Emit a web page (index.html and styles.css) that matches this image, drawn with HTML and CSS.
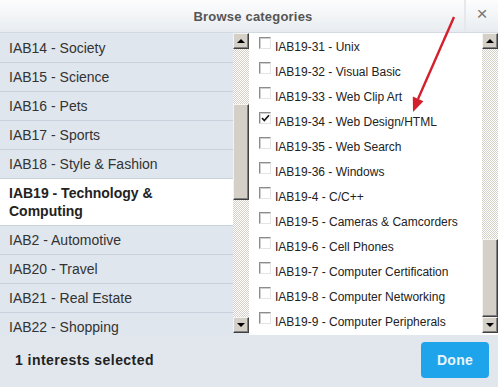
FILE: index.html
```html
<!DOCTYPE html>
<html lang="en">
<head>
  <meta charset="UTF-8" />
  <title>Browse categories</title>
  <meta name="viewport" content="width=device-width, initial-scale=1.0" />
  <link rel="stylesheet" href="styles.css">
</head>
<body>
  <div class="dialog">
    <header class="dlg-head">
      <h1 class="dlg-title">Browse categories</h1>
      <span class="dlg-close">&times;</span>
    </header>

    <div class="dlg-body">
      <div class="pane pane-cats">
        <ul class="cat-list">
          <li>IAB14 - Society</li>
          <li>IAB15 - Science</li>
          <li>IAB16 - Pets</li>
          <li>IAB17 - Sports</li>
          <li>IAB18 - Style &amp; Fashion</li>
          <li class="active">IAB19 - Technology &amp; Computing</li>
          <li>IAB2 - Automotive</li>
          <li>IAB20 - Travel</li>
          <li>IAB21 - Real Estate</li>
          <li>IAB22 - Shopping</li>
        </ul>
        <div class="scrollbar">
          <span class="sb-btn up"></span>
          <span class="sb-track"><span class="sb-thumb" style="margin-top: 55px; height: 96px;"></span></span>
          <span class="sb-btn down"></span>
        </div>
      </div>

      <div class="pane pane-subs">
        <ul class="sub-list">
          <li><span class="box"></span>IAB19-31 - Unix</li>
          <li><span class="box"></span>IAB19-32 - Visual Basic</li>
          <li><span class="box"></span>IAB19-33 - Web Clip Art</li>
          <li><span class="box checked"><svg width="9" height="9" viewBox="0 0 9 9"><path d="M1 4 L3.3 6.5 L8 1.2" fill="none" stroke="#111" stroke-width="1.6"/></svg></span>IAB19-34 - Web Design/HTML</li>
          <li><span class="box"></span>IAB19-35 - Web Search</li>
          <li><span class="box"></span>IAB19-36 - Windows</li>
          <li><span class="box"></span>IAB19-4 - C/C++</li>
          <li><span class="box"></span>IAB19-5 - Cameras &amp; Camcorders</li>
          <li><span class="box"></span>IAB19-6 - Cell Phones</li>
          <li><span class="box"></span>IAB19-7 - Computer Certification</li>
          <li><span class="box"></span>IAB19-8 - Computer Networking</li>
          <li><span class="box"></span>IAB19-9 - Computer Peripherals</li>
        </ul>
        <div class="scrollbar">
          <span class="sb-btn up"></span>
          <span class="sb-track"><span class="sb-thumb" style="margin-top: 190px; height: 78px;"></span></span>
          <span class="sb-btn down"></span>
        </div>
      </div>
    </div>

    <footer class="dlg-foot">
      <span class="count">1 interests selected</span>
      <button class="btn-done">Done</button>
    </footer>

    <!-- red pointer drawn over the screenshot -->
    <svg class="pointer" width="498" height="387" viewBox="0 0 498 387">
      <path d="M454 17 L418 99" stroke="#d3202c" stroke-width="2.4" fill="none"/>
      <path d="M413 112 L412.8 96.6 L423.4 101.2 Z" fill="#d3202c"/>
    </svg>
  </div>
</body>
</html>
```

FILE: styles.css
```css
* {
  box-sizing: border-box;
}

body {
  margin: 0;
  background-color: #fff;
  font-family: "Liberation Sans", Arial, sans-serif;
  color: #333;
}

.dialog {
  position: relative;
  width: 498px;
  height: 387px;
  display: flex;
  flex-direction: column;
  overflow: hidden;
  background-color: #e1e7ee;
}

/* header */
.dlg-head {
  height: 33px;
  flex: none;
  display: flex;
  align-items: stretch;
  background: linear-gradient(#fdfdfd, #e8ecf0);
  border-bottom: 1px solid #d3dae2;
}

.dlg-title {
  flex: 1;
  margin: 0;
  padding-left: 42px;
  font-size: 13px;
  font-weight: bold;
  letter-spacing: 0.2px;
  color: #555;
  display: flex;
  align-items: center;
  justify-content: center;
}

.dlg-close {
  width: 34px;
  border-left: 2px solid #e6e9ec;
  display: flex;
  align-items: center;
  justify-content: center;
  font-size: 19px;
  color: #777;
  padding-bottom: 4px;
}

/* body */
.dlg-body {
  height: 302px;
  flex: none;
  display: flex;
}

.pane {
  display: flex;
  height: 100%;
}

.pane-cats {
  width: 249px;
}

.pane-subs {
  flex: 1;
  background-color: #fff;
}

.cat-list,
.sub-list {
  list-style: none;
  margin: 0;
  padding: 0;
  flex: 1;
  overflow: hidden;
}

.cat-list {
  padding-top: 1px;
  width: 233px;
}

.cat-list li {
  padding: 6px 9px;
  line-height: 16px;
  font-size: 14px;
  color: #333;
  border-bottom: 1px solid #c9d2dc;
  background-color: #dfe6ee;
}

.cat-list li.active {
  background-color: #fff;
  font-weight: bold;
  color: #222;
  line-height: 18px;
  padding: 5px 9px;
}

.sub-list {
  padding-top: 1px;
  padding-left: 10px;
}

.sub-list li {
  height: 25px;
  display: flex;
  align-items: center;
  font-size: 12px;
  color: #222;
  padding-top: 1px;
}

.box {
  width: 12px;
  height: 12px;
  margin-right: 4px;
  margin-top: -8px;
  flex: none;
  border: 1px solid;
  border-color: #8c8c8c #e4e4e4 #e4e4e4 #8c8c8c;
  box-shadow: inset 1px 1px #cfcfcf;
  background-color: #fff;
  display: flex;
  align-items: center;
  justify-content: center;
}

/* classic scrollbars */
.scrollbar {
  width: 16px;
  flex: none;
  display: flex;
  flex-direction: column;
  padding-bottom: 2px;
}

.sb-track {
  flex: 1;
  display: flex;
  flex-direction: column;
  background: repeating-conic-gradient(#d4d0c8 0 25%, #fff 0 50%) 0 0 / 2px 2px;
}

.sb-btn,
.sb-thumb {
  display: block;
  background-color: #d4d0c8;
  border: 1px solid;
  border-color: #f4f3f0 #404040 #404040 #f4f3f0;
  box-shadow: inset -1px -1px #808080;
}

.sb-btn {
  height: 16px;
  flex: none;
  position: relative;
}

.sb-btn::after {
  content: "";
  position: absolute;
  left: 3px;
  top: 5px;
  border-left: 4px solid transparent;
  border-right: 4px solid transparent;
}

.sb-btn.up::after {
  border-bottom: 4px solid #000;
}

.sb-btn.down::after {
  border-top: 4px solid #000;
}

.sb-thumb {
  flex: none;
}

/* footer */
.dlg-foot {
  flex: 1;
  display: flex;
  align-items: center;
  justify-content: space-between;
  padding: 0 9px 0 15px;
  background-color: #e1e7ed;
}

.count {
  font-size: 14px;
  font-weight: bold;
  letter-spacing: 0.45px;
  color: #222;
  margin-top: -3px;
}

.btn-done {
  width: 68px;
  height: 36px;
  margin-top: -3px;
  border: none;
  border-radius: 4px;
  background-color: #1ea4ea;
  color: #e8f5fc;
  font-family: inherit;
  font-size: 14px;
  font-weight: bold;
  letter-spacing: 0.3px;
  cursor: pointer;
}

.pointer {
  position: absolute;
  left: 0;
  top: 0;
  pointer-events: none;
}
```
